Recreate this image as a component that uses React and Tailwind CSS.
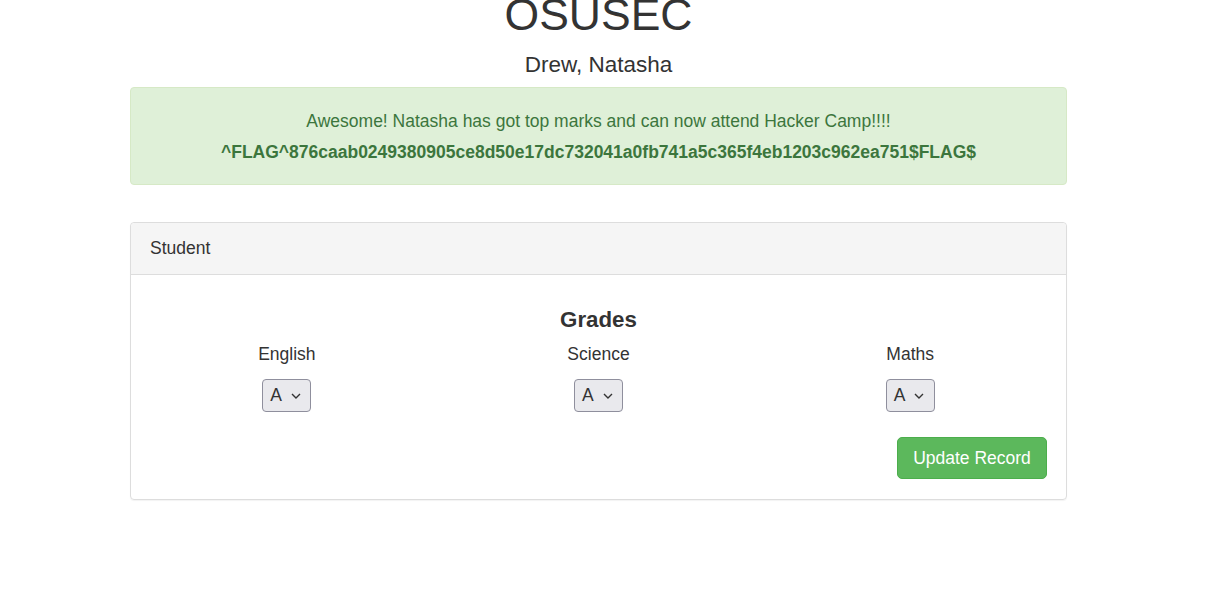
export default function App() {
  const subjects = ['English', 'Science', 'Maths']

  return (
    <div className="min-h-screen bg-white text-[#333]" style={{ fontFamily: '"Liberation Sans", Arial, sans-serif' }}>
      <div className="w-[1197px]">
        <div className="mx-auto w-[937px] flex flex-col items-center">
          <h1 className="text-[44.5px] leading-none mt-[-7px]">OSUSEC</h1>
          <h4 className="text-[22.5px] leading-none mt-[16px]">Drew, Natasha</h4>

          {/* Alert */}
          <div className="mt-[11px] w-full h-[98px] rounded border border-[#d6e9c6] bg-[#dff0d8] text-[#3c763d] flex flex-col items-center pt-[23px]">
            <p className="text-[17.5px] leading-5">Awesome! Natasha has got top marks and can now attend Hacker Camp!!!!</p>
            <p className="text-[17.5px] leading-5 font-bold mt-[11px]">^FLAG^876caab0249380905ce8d50e17dc732041a0fb741a5c365f4eb1203c962ea751$FLAG$</p>
          </div>

          {/* Panel */}
          <div className="mt-[37px] w-full rounded border border-[#ddd] shadow-[0_1px_1px_rgba(0,0,0,0.05)]">
            <div className="h-[52px] bg-[#f5f5f5] border-b border-[#ddd] px-[19px] flex items-center text-[17.5px] rounded-t">
              Student
            </div>
            <div className="pt-[34px] pb-[20px]">
              <h3 className="text-center text-[22.3px] font-bold leading-none">Grades</h3>
              <div className="grid grid-cols-3 mt-[13px]">
                {subjects.map((s) => (
                  <div key={s} className="flex flex-col items-center">
                    <span className="text-[17.5px] leading-5">{s}</span>
                    <div className="mt-[15px] w-[49px] h-[33px] rounded-[4px] border border-[#8f8f9d] bg-[#e9e9ed] flex items-center pl-[7px] gap-[9px]">
                      <span className="text-[17.5px] leading-none text-[#333]">A</span>
                      <svg width="10" height="6" viewBox="0 0 10 6" fill="none" stroke="#333" strokeWidth="1.4">
                        <path d="M1 1l4 4 4-4" />
                      </svg>
                    </div>
                  </div>
                ))}
              </div>
              <div className="flex justify-end pr-[19px] mt-[25px]">
                <button className="w-[150px] h-[42px] rounded-[5px] bg-[#5cb85c] border border-[#4cae4c] text-white text-[17.5px]">
                  Update Record
                </button>
              </div>
            </div>
          </div>
        </div>
      </div>
    </div>
  )
}
